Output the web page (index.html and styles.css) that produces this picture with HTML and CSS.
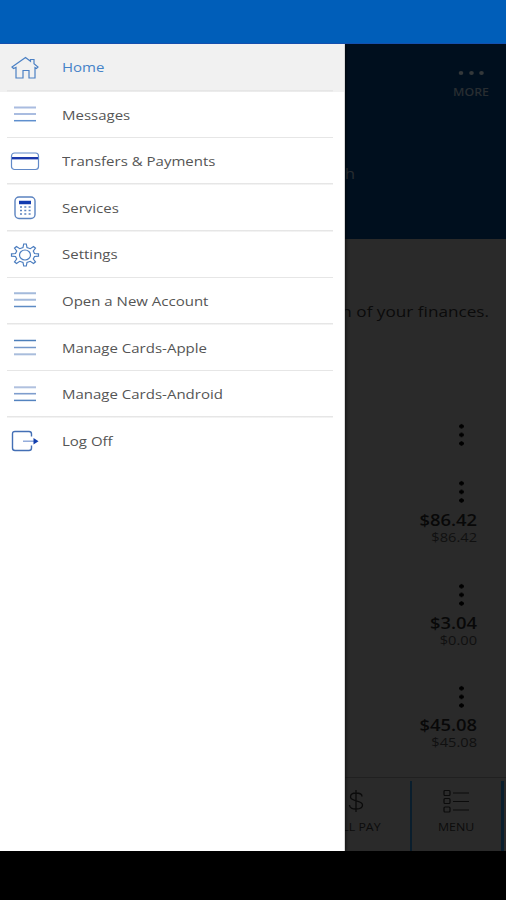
FILE: index.html
```html
<!DOCTYPE html>
<html lang="en">
<head>
<meta charset="utf-8">
<title>Mobile Banking</title>
<link rel="stylesheet" href="styles.css">
</head>
<body>
<div class="status"></div>
<div class="stage">
  <main class="page">
    <header class="hero">
      <div class="more">
        <svg width="28" height="6" viewBox="0 0 28 6"><g fill="#34383a"><ellipse cx="4" cy="3" rx="2.300" ry="1.900"/><ellipse cx="14.500" cy="3" rx="2.300" ry="1.900"/><ellipse cx="24.500" cy="3" rx="2.300" ry="1.900"/></g></svg>
        <span class="wide more-label">MORE</span>
      </div>
      <p class="wide greeting">h</p>
    </header>
    <section class="intro"><p class="wide">n of your finances.</p></section>
    <section class="accounts">
      <div class="group"><i class="dots"></i></div>
      <div class="account"><i class="dots"></i><b class="wide">$86.42</b><span class="wide">$86.42</span></div>
      <div class="account"><i class="dots"></i><b class="wide">$3.04</b><span class="wide">$0.00</span></div>
      <div class="account"><i class="dots"></i><b class="wide">$45.08</b><span class="wide">$45.08</span></div>
    </section>
    <footer class="tabs">
      <div class="tab pay">
        <svg width="18" height="24" viewBox="0 0 18 24" fill="none" stroke="#0b0b0b" stroke-width="1.300"><path d="M9 1v22M15 7.500C15 5 12.500 4 9 4S3.500 5 3.500 8c0 5 12 2.500 12 8 0 3-3 4-6.500 4S2.500 19 2.500 16"/></svg>
        <span class="wide">BILL PAY</span>
      </div>
      <div class="tab menu">
        <svg width="27" height="24" viewBox="0 0 27 24" fill="none" stroke="#0b0b0b" stroke-width="1.200"><rect x="1" y="1.500" width="6" height="5" rx="1"/><rect x="1" y="9.500" width="6" height="5" rx="1"/><rect x="1" y="18" width="6" height="5" rx="1"/><path d="M10 4h16M10 12.500h16M10 21h16"/></svg>
        <span class="wide">MENU</span>
      </div>
    </footer>
  </main>
  <nav class="drawer">
    <a class="item active"><svg class="icon" viewBox="0 0 30 26" fill="none" stroke="#4b80c4" stroke-width="1.200"><path d="M2 12 15.500 2.500l5 3.700V4.500H24v4.200l4 3.300-1.500 1.500L25 12.500V23h-6v-7.500h-6V23H6V12.500l-2.500 1z"/></svg><span class="wide">Home</span></a>
    <a class="item"><svg class="icon" viewBox="0 0 30 26"><path d="M4 5.500h22M4 12h22" stroke="#a9bce0" stroke-width="2"/><path d="M4 18.700h22" stroke="#5f8fce" stroke-width="1.500"/></svg><span class="wide">Messages</span></a>
    <a class="item"><svg class="icon" viewBox="0 0 30 26" fill="none"><rect x="1.500" y="4" width="27" height="16.500" rx="3" stroke="#6189c8" stroke-width="1.200"/><path d="M2 9.200h26" stroke="#1b38ac" stroke-width="2.400"/></svg><span class="wide">Transfers &amp; Payments</span></a>
    <a class="item"><svg class="icon" viewBox="0 0 30 26" fill="none"><rect x="5" y="2" width="20" height="21.500" rx="4" stroke="#5b83c0" stroke-width="1.400"/><path d="M9 7.500h12" stroke="#123bb0" stroke-width="3.500"/><path d="M10 12h11M10 15.500h11M10 19h11" stroke="#5b83c0" stroke-width="1.300" stroke-dasharray="2 2.300"/></svg><span class="wide">Services</span></a>
    <a class="item"><svg class="icon" viewBox="0 0 30 26" fill="none" stroke="#4b7dbf" stroke-width="1.200"><path d="M13 5.500 13.700 2h2.600l.7 3.500 3.300 1.200L23.500 4.500l2 1.700L23.300 9l1.200 2.500 4 .4v2.200l-4 .4-1.200 2.500 2.200 2.800-2 1.700-3.200-2.200-3.300 1.200-.7 3.500h-2.600l-.7-3.500-3.300-1.200-3.200 2.200-2-1.700L6.700 17l-1.200-2.500-4-.4v-2.200l4-.4L6.700 9 4.500 6.200l2-1.700 3.200 2.200z"/><ellipse cx="15" cy="13" rx="5.500" ry="5"/></svg><span class="wide">Settings</span></a>
    <a class="item"><svg class="icon" viewBox="0 0 30 26"><path d="M4 5.200h22M4 11.700h22" stroke="#a4badb" stroke-width="1.900"/><path d="M4 18.500h22" stroke="#5d8bc4" stroke-width="1.500"/></svg><span class="wide">Open a New Account</span></a>
    <a class="item"><svg class="icon" viewBox="0 0 30 26"><path d="M4 5.500h22" stroke="#4d7fba" stroke-width="1.500"/><path d="M4 12.500h22" stroke="#7598ca" stroke-width="1.500"/><path d="M4 19.300h22" stroke="#a9bddc" stroke-width="2"/></svg><span class="wide">Manage Cards-Apple</span></a>
    <a class="item"><svg class="icon" viewBox="0 0 30 26"><path d="M4 5.300h22" stroke="#b0c1df" stroke-width="2"/><path d="M4 11.700h22" stroke="#7e9dcd" stroke-width="1.600"/><path d="M4 18.400h22" stroke="#5383bf" stroke-width="1.500"/></svg><span class="wide">Manage Cards-Android</span></a>
    <a class="item"><svg class="icon" viewBox="0 0 30 26" fill="none"><path d="M21.500 8.500V6q0-2.500-2.500-2.500H5Q2.500 3.500 2.500 6v14q0 2.500 2.500 2.500h14q2.500 0 2.500-2.500v-2.500" stroke="#436fb5" stroke-width="1.400"/><path d="M13 13.200h11" stroke="#829fd5" stroke-width="1.300"/><path d="m23.500 10 5 3.200-5 3.200z" fill="#123fae"/></svg><span class="wide">Log Off</span></a>
  </nav>
</div>
</body>
</html>
```

FILE: styles.css
```css
* { box-sizing: border-box; }
body {
  margin: 0;
  height: 900px;
  overflow: hidden;
  background: #000;
  font-family: "Open Sans", sans-serif;
}
p { margin: 0; }
svg { display: block; }

/* Letterforms are drawn wider than the natural face */
.wide {
  display: block;
  white-space: nowrap;
  transform: scaleX(1.2);
  transform-origin: right center;
}

.status { height: 44px; background: #005eb9; border-bottom: 1px solid #1450ae; }
.stage { position: relative; height: 807px; overflow: hidden; background: #2a2a2a; }

.page { display: flex; flex-direction: column; height: 100%; }
.hero { flex: none; height: 195px; padding: 26px 17px 0; background: #000f1e; color: #282d31; }
.more { display: flex; flex-direction: column; align-items: flex-end; }
.more svg { margin-right: 4px; }
.more-label { margin-top: 9px; font-size: 10.300px; line-height: 14px; font-weight: 600; }
.greeting { margin: 65px 134px 0 0; text-align: right; font-size: 14px; line-height: 20px; }

.intro { flex: none; height: 167px; padding: 62px 17px 0; text-align: right; color: #0b0b0b; font-size: 14.300px; line-height: 22px; }
.accounts { display: flex; flex: 1; min-height: 0; flex-direction: column; color: #080808; }
.group { flex: none; height: 73px; padding: 16px 42px 0 0; }
.account { flex: none; height: 102.700px; padding: 0 29px 0 0; text-align: right; }
.dots {
  display: block;
  width: 5px;
  height: 25px;
  margin-left: auto;
  background: radial-gradient(ellipse 2.600px 2.300px, #000 80%, transparent 100%) 0 0 / 5px 8.600px;
}
.account .dots { margin-right: 13px; }
.account b { margin-top: 6px; font-size: 15.300px; line-height: 20px; font-weight: 600; }
.account span { font-size: 12.200px; line-height: 15px; color: #101010; }

.tabs {
  display: flex;
  flex: none;
  justify-content: flex-end;
  height: 74px;
  border-top: 1px solid #202020;
  color: #0c0c0c;
  font-size: 10.300px;
  line-height: 14px;
}
.tab { display: flex; flex-direction: column; align-items: center; padding-top: 8px; margin-top: 3px; }
.tab .wide { transform-origin: center; margin-top: 7px; }
.pay { width: 110px; border-right: 2px solid #0a1e2d; }
.menu { width: 92px; border-right: 3px solid #0a1e2d; margin-right: 2px; }

.drawer {
  position: absolute;
  top: 0;
  left: 0;
  width: 345px;
  height: 807px;
  background: #fff;
  border-right: 1px solid #d8d8d8;
  box-shadow: 1px 0 3px rgba(0, 0, 0, .6);
}
.item {
  display: flex;
  align-items: center;
  height: 46.600px;
  padding-left: 10px;
  gap: 22px;
  color: #555;
  font-size: 12.500px;
  background: linear-gradient(#e6e6e6, #e6e6e6) 7px 100% / 326px 1.500px no-repeat;
}
.item .wide { transform-origin: left center; }
.item:last-child { background: none; }
.item.active { color: #4583c8; background-color: #f1f1f1; height: 47.800px; }
.icon { width: 30px; height: 26px; }
```
